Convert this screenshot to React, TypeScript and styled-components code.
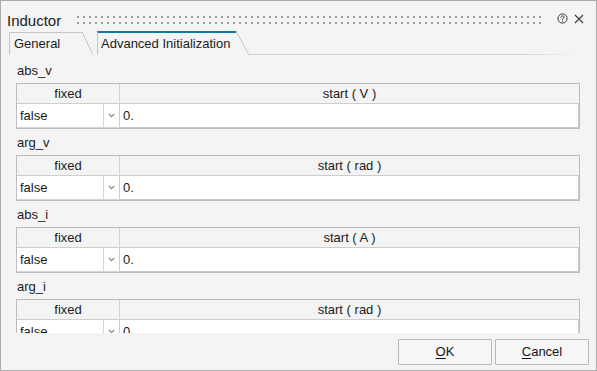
import React from 'react';
import styled, { createGlobalStyle } from 'styled-components';

const GlobalStyle = createGlobalStyle`
  html, body {
    margin: 0;
    padding: 0;
    background: #f4f4f4;
  }
  * {
    box-sizing: border-box;
  }
`;

interface Param {
  name: string;
  unit: string;
}

const params: Param[] = [
  { name: 'abs_v', unit: 'V' },
  { name: 'arg_v', unit: 'rad' },
  { name: 'abs_i', unit: 'A' },
  { name: 'arg_i', unit: 'rad' },
];

const HelpIcon = () => (
  <svg width="11" height="11" viewBox="0 0 11 11" fill="none">
    <circle cx="5.5" cy="5.5" r="4.6" stroke="#3a3a3a" strokeWidth="1" />
    <path
      d="M4 4.3a1.5 1.5 0 1 1 2.2 1.3c-.5.3-.7.5-.7 1.1"
      stroke="#3a3a3a"
      strokeWidth="1"
      strokeLinecap="round"
    />
    <circle cx="5.5" cy="8.1" r="0.6" fill="#3a3a3a" />
  </svg>
);

const CloseIcon = () => (
  <svg width="10" height="10" viewBox="0 0 10 10" fill="none">
    <path d="M1 1l8 8M9 1l-8 8" stroke="#3a3a3a" strokeWidth="1.1" />
  </svg>
);

const Chevron = () => (
  <svg width="7" height="5" viewBox="0 0 7 5" fill="none">
    <path d="M0.8 1l2.7 2.6L6.2 1" stroke="#8a8a8a" strokeWidth="1.3" />
  </svg>
);

export default function App() {
  return (
    <>
      <GlobalStyle />
      <Window>
        <TitleBar>
          <Title>Inductor</Title>
          <Grip />
          <TitleButton>
            <HelpIcon />
          </TitleButton>
          <TitleButton>
            <CloseIcon />
          </TitleButton>
        </TitleBar>

        <TabBar>
          <Tab>
            <TabFace $width={73}>General</TabFace>
            <TabSlant $width={11} />
          </Tab>
          <Tab $active>
            <TabFace $active $width={139}>Advanced Initialization</TabFace>
            <TabSlant $width={13} />
          </Tab>
          <TabFiller />
        </TabBar>

        <Content>
          {params.map((p) => (
            <Section key={p.name}>
              <SectionLabel>{p.name}</SectionLabel>
              <Table>
                <HeaderCell $divider>fixed</HeaderCell>
                <HeaderCell>start ( {p.unit} )</HeaderCell>
                <SelectCell>
                  <SelectValue>false</SelectValue>
                  <SelectArrow>
                    <Chevron />
                  </SelectArrow>
                </SelectCell>
                <InputCell>0.</InputCell>
              </Table>
            </Section>
          ))}
        </Content>

        <Footer>
          <DialogButton>
            <u>O</u>K
          </DialogButton>
          <DialogButton>
            <u>C</u>ancel
          </DialogButton>
        </Footer>
      </Window>
    </>
  );
}

const Window = styled.div`
  width: 597px;
  height: 371px;
  border: 1px solid #ababab;
  background: #f4f4f4;
  display: flex;
  flex-direction: column;
  overflow: hidden;
  font-family: 'Liberation Sans', Arial, sans-serif;
  color: #1b1b1b;
`;

const TitleBar = styled.div`
  height: 30px;
  flex-shrink: 0;
  display: flex;
  align-items: center;
  padding: 5px 9px 0 6px;
`;

const Title = styled.div`
  font-size: 15px;
  line-height: 17px;
  margin-top: 3px;
  color: #222;
`;

const Grip = styled.div`
  flex: 1;
  height: 12px;
  margin: 2px 8px 0 14px;
  background-image: radial-gradient(circle, #9c9c9c 0.9px, transparent 1.2px);
  background-size: 6px 6px;
  background-position: 0 0;
`;

const TitleButton = styled.div`
  width: 16px;
  height: 16px;
  display: flex;
  align-items: center;
  justify-content: center;
  margin-left: 1px;
`;

const TabBar = styled.div`
  height: 24px;
  flex-shrink: 0;
  display: flex;
  align-items: flex-end;
  padding-left: 8px;
`;

const Tab = styled.div<{ $active?: boolean }>`
  display: flex;
  align-items: stretch;
  height: ${({ $active }) => ($active ? '24px' : '23px')};
  margin-left: ${({ $active }) => ($active ? '4px' : '0')};
`;

const TabFace = styled.div<{ $active?: boolean; $width: number }>`
  width: ${({ $width }) => $width}px;
  border-left: 1px solid #c6c6c6;
  border-top: ${({ $active }) => ($active ? '2px solid #0a7aa8' : '1px solid #c6c6c6')};
  padding-left: ${({ $active }) => ($active ? '3px' : '4px')};
  padding-bottom: 1px;
  display: flex;
  align-items: center;
  font-size: 13px;
  color: #1b1b1b;
  white-space: nowrap;
`;

const TabSlant = styled.span<{ $width: number }>`
  width: ${({ $width }) => $width}px;
  background: linear-gradient(
    to top right,
    transparent calc(50% - 0.7px),
    #bcbcbc 50%,
    transparent calc(50% + 0.7px)
  );
`;

const TabFiller = styled.div`
  flex: 1;
  height: 1px;
  margin-right: 16px;
  background: linear-gradient(to right, #d2d2d2, #d2d2d2 80%, #f4f4f4);
`;

const Content = styled.div`
  flex: 1;
  overflow: hidden;
  padding: 2px 16px 0 15px;
`;

const Section = styled.div`
  display: flex;
  flex-direction: column;
`;

const SectionLabel = styled.div`
  height: 26px;
  padding-top: 6px;
  font-size: 13px;
  line-height: 16px;
  padding-left: 1px;
`;

const Table = styled.div`
  display: grid;
  grid-template-columns: 103px 1fr;
  grid-template-rows: 20px 24px;
  border: 1px solid #bdbdbd;
  font-size: 13px;
`;

const HeaderCell = styled.div<{ $divider?: boolean }>`
  display: flex;
  align-items: center;
  justify-content: center;
  border-bottom: 1px solid #cdcdcd;
  border-right: ${({ $divider }) => ($divider ? '1px solid #d4d4d4' : 'none')};
  background: #f4f4f4;
  padding-bottom: 1px;
`;

const SelectCell = styled.div`
  display: flex;
  background: #fff;
  border-right: 1px solid #cdcdcd;
  border-bottom: 1px solid #d6d6d6;
`;

const SelectValue = styled.div`
  flex: 1;
  display: flex;
  align-items: center;
  padding-left: 3px;
  border-right: 1px solid #d6d6d6;
`;

const SelectArrow = styled.div`
  width: 15px;
  display: flex;
  align-items: center;
  justify-content: center;
`;

const InputCell = styled.div`
  display: flex;
  align-items: center;
  padding-left: 3px;
  background: #fff;
  border-bottom: 1px solid #cbcbcb;
  border-right: 1px solid #cbcbcb;
`;

const Footer = styled.div`
  height: 37px;
  flex-shrink: 0;
  display: flex;
  align-items: center;
  justify-content: flex-end;
  gap: 3px;
  padding-right: 7px;
`;

const DialogButton = styled.button`
  width: 94px;
  height: 26px;
  background: #f6f6f6;
  border: 1px solid #b8b8b8;
  border-radius: 1px;
  font-family: 'Liberation Sans', Arial, sans-serif;
  font-size: 13px;
  color: #151515;
  padding: 0;

  u {
    text-decoration-thickness: 1px;
    text-underline-offset: 2px;
  }
`;
